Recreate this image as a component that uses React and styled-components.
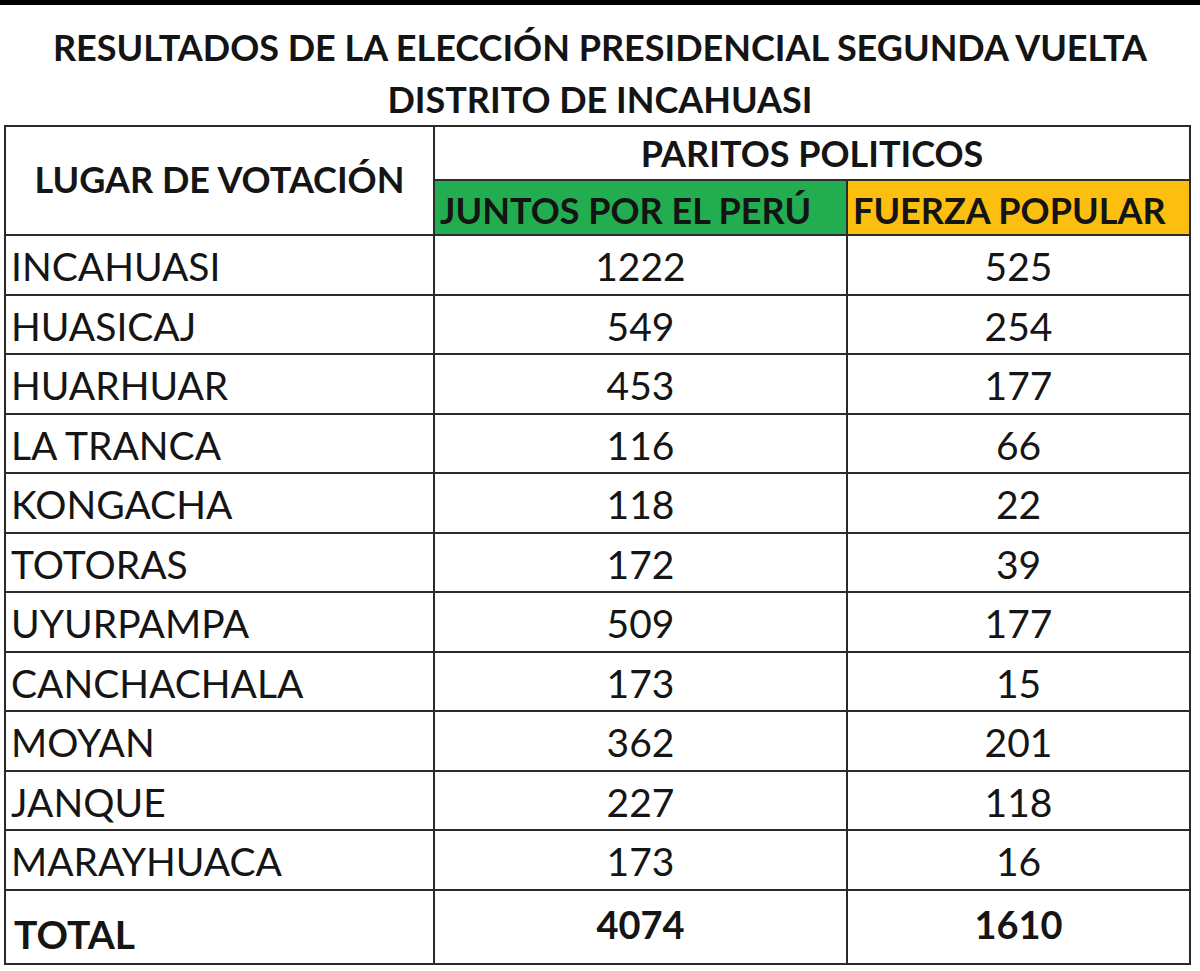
import React from 'react';
import styled, { createGlobalStyle } from 'styled-components';

const rows = [
  { place: 'INCAHUASI', jp: 1222, fp: 525 },
  { place: 'HUASICAJ', jp: 549, fp: 254 },
  { place: 'HUARHUAR', jp: 453, fp: 177 },
  { place: 'LA TRANCA', jp: 116, fp: 66 },
  { place: 'KONGACHA', jp: 118, fp: 22 },
  { place: 'TOTORAS', jp: 172, fp: 39 },
  { place: 'UYURPAMPA', jp: 509, fp: 177 },
  { place: 'CANCHACHALA', jp: 173, fp: 15 },
  { place: 'MOYAN', jp: 362, fp: 201 },
  { place: 'JANQUE', jp: 227, fp: 118 },
  { place: 'MARAYHUACA', jp: 173, fp: 16 },
];

const GlobalStyle = createGlobalStyle`
  body {
    margin: 0;
    background: #fff;
    font-family: Lato, 'Open Sans', sans-serif;
    color: #151515;
  }
`;

export default function App() {
  const totalJp = rows.reduce((s, r) => s + r.jp, 0);
  const totalFp = rows.reduce((s, r) => s + r.fp, 0);

  return (
    <>
      <GlobalStyle />
      <Page>
        <TopBar />
        <Title>
          RESULTADOS DE LA ELECCIÓN PRESIDENCIAL SEGUNDA VUELTA
          <br />
          DISTRITO DE INCAHUASI
        </Title>
        <Table>
          <colgroup>
            <col style={{ width: 429 }} />
            <col style={{ width: 413 }} />
            <col style={{ width: 343 }} />
          </colgroup>
          <thead>
            <tr>
              <HeadCell rowSpan={2}>LUGAR DE VOTACIÓN</HeadCell>
              <GroupCell colSpan={2}>PARITOS POLITICOS</GroupCell>
            </tr>
            <tr>
              <PartyCell color="#22ad50">JUNTOS POR EL PERÚ</PartyCell>
              <PartyCell color="#fdbf0f">FUERZA POPULAR</PartyCell>
            </tr>
          </thead>
          <tbody>
            {rows.map(r => (
              <Row key={r.place}>
                <PlaceCell>{r.place}</PlaceCell>
                <NumCell>{r.jp}</NumCell>
                <NumCell>{r.fp}</NumCell>
              </Row>
            ))}
            <TotalRow>
              <TotalLabel>TOTAL</TotalLabel>
              <TotalNum>{totalJp}</TotalNum>
              <TotalNum>{totalFp}</TotalNum>
            </TotalRow>
          </tbody>
        </Table>
      </Page>
    </>
  );
}

const Page = styled.div`
  width: 1200px;
  height: 971px;
  overflow: hidden;
  background: #fff;
`;

const TopBar = styled.div`
  height: 5px;
  background: #000;
`;

const Title = styled.h1`
  margin: 0;
  padding-top: 16px;
  height: 104px;
  text-align: center;
  font-size: 36px;
  font-weight: 700;
  line-height: 52px;
  color: #141414;
`;

const Table = styled.table`
  margin-left: 4px;
  width: 1185px;
  table-layout: fixed;
  border-collapse: collapse;

  td,
  th {
    border: 2px solid #2b2b2b;
    padding: 0;
  }
`;

const HeadCell = styled.th`
  height: 102px;
  font-size: 36px;
  font-weight: 700;
  text-align: center;
  vertical-align: middle;
  padding-bottom: 4px !important;
`;

const GroupCell = styled.th`
  height: 52px;
  font-size: 36px;
  font-weight: 700;
  text-align: center;
  vertical-align: middle;
`;

const PartyCell = styled.th`
  height: 49px;
  background: ${p => p.color};
  font-size: 36px;
  font-weight: 700;
  text-align: left;
  padding-left: 5px !important;
  padding-top: 4px !important;
  vertical-align: middle;
  color: #141414;
`;

const Row = styled.tr`
  height: 59.5px;
`;

const PlaceCell = styled.td`
  font-size: 39px;
  padding: 4px 0 0 5px !important;
  vertical-align: middle;
  line-height: 1;
`;

const NumCell = styled.td`
  font-size: 39px;
  text-align: center;
  padding-top: 4px !important;
  vertical-align: middle;
  line-height: 1;
`;

const TotalRow = styled.tr`
  height: 74px;
`;

const TotalLabel = styled.td`
  font-size: 39px;
  font-weight: 700;
  vertical-align: bottom;
  padding: 0 0 9px 8px !important;
  line-height: 1;
`;

const TotalNum = styled.td`
  font-size: 38px;
  font-weight: 700;
  text-align: center;
  vertical-align: middle;
  padding-bottom: 6px !important;
  line-height: 1;
`;
